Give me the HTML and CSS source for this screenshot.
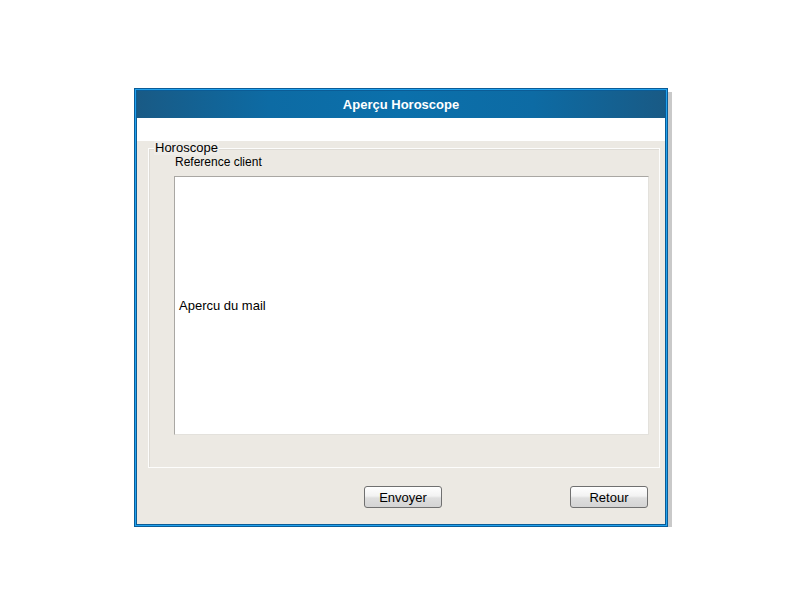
FILE: index.html
```html
<!DOCTYPE html>
<html lang="fr">
<head>
<meta charset="utf-8">
<title>Aperçu Horoscope</title>
<link rel="stylesheet" href="styles.css">
</head>
<body>
<div class="window">
  <div class="titlebar">Aperçu Horoscope</div>
  <div class="strip"></div>
  <div class="content">
    <fieldset class="group">
      <legend class="legend">Horoscope</legend>
      <div class="label">Reference client</div>
      <div class="preview">Apercu du mail</div>
    </fieldset>
    <div class="buttons">
      <button class="btn" type="button">Envoyer</button>
      <button class="btn" type="button">Retour</button>
    </div>
  </div>
</div>
</body>
</html>
```

FILE: styles.css
```css
html, body {
  margin: 0;
  padding: 0;
  background: #ffffff;
  font-family: "Liberation Sans", Arial, sans-serif;
  color: #000;
}

.window {
  width: 528px;
  margin: 88px 0 0 134px;
  padding: 2px;
  border: 1px solid #0b5c96;
  background: #ece9e3;
  box-shadow: inset 0 0 0 1px #22a2ee, inset 0 0 0 2px #0b5c96, 4px 4px 0 #c9c9c9;
}

.titlebar {
  height: 27px;
  line-height: 27px;
  text-align: center;
  color: #fff;
  font-weight: bold;
  font-size: 13px;
  background: linear-gradient(to right, #195a85 0%, #0d6ba4 25%, #0b70ab 50%, #0d6ba4 75%, #195a85 100%);
}

.strip {
  height: 23px;
  background: #fff;
}

.content {
  height: 383px;
  padding: 0 5px 0 11px;
  box-sizing: border-box;
}

.group {
  margin: 0;
  padding: 0;
  height: 327px;
  box-sizing: border-box;
  border: 1px solid #fdfdfc;
  box-shadow: inset 1px 1px 0 #dedbd5;
  min-width: 0;
}

.legend {
  margin-left: 5px;
  padding: 0 1px;
  font-size: 13px;
  line-height: 14px;
  background: #efede9;
}

.label {
  margin: 0 0 0 26px;
  font-size: 12px;
  line-height: 14px;
}

.preview {
  margin: 7px 0 0 25px;
  width: 469px;
  height: 257px;
  border: 1px solid #a9a7a3;
  border-right-color: #e3e1dc;
  border-bottom-color: #e3e1dc;
  background: #fff;
  display: flex;
  align-items: center;
  padding-left: 4px;
  box-sizing: content-box;
  font-size: 13px;
}

.buttons {
  display: flex;
  gap: 128px;
  margin-top: 18px;
  padding-left: 216px;
}

.btn {
  width: 78px;
  height: 22px;
  margin: 0;
  padding: 0;
  font-family: "Liberation Sans", Arial, sans-serif;
  font-size: 13px;
  color: #000;
  border: 1px solid #707070;
  border-radius: 3px;
  background: linear-gradient(to bottom, #ffffff 0%, #f2f2f2 45%, #dedede 55%, #d4d4d4 100%);
}
```
